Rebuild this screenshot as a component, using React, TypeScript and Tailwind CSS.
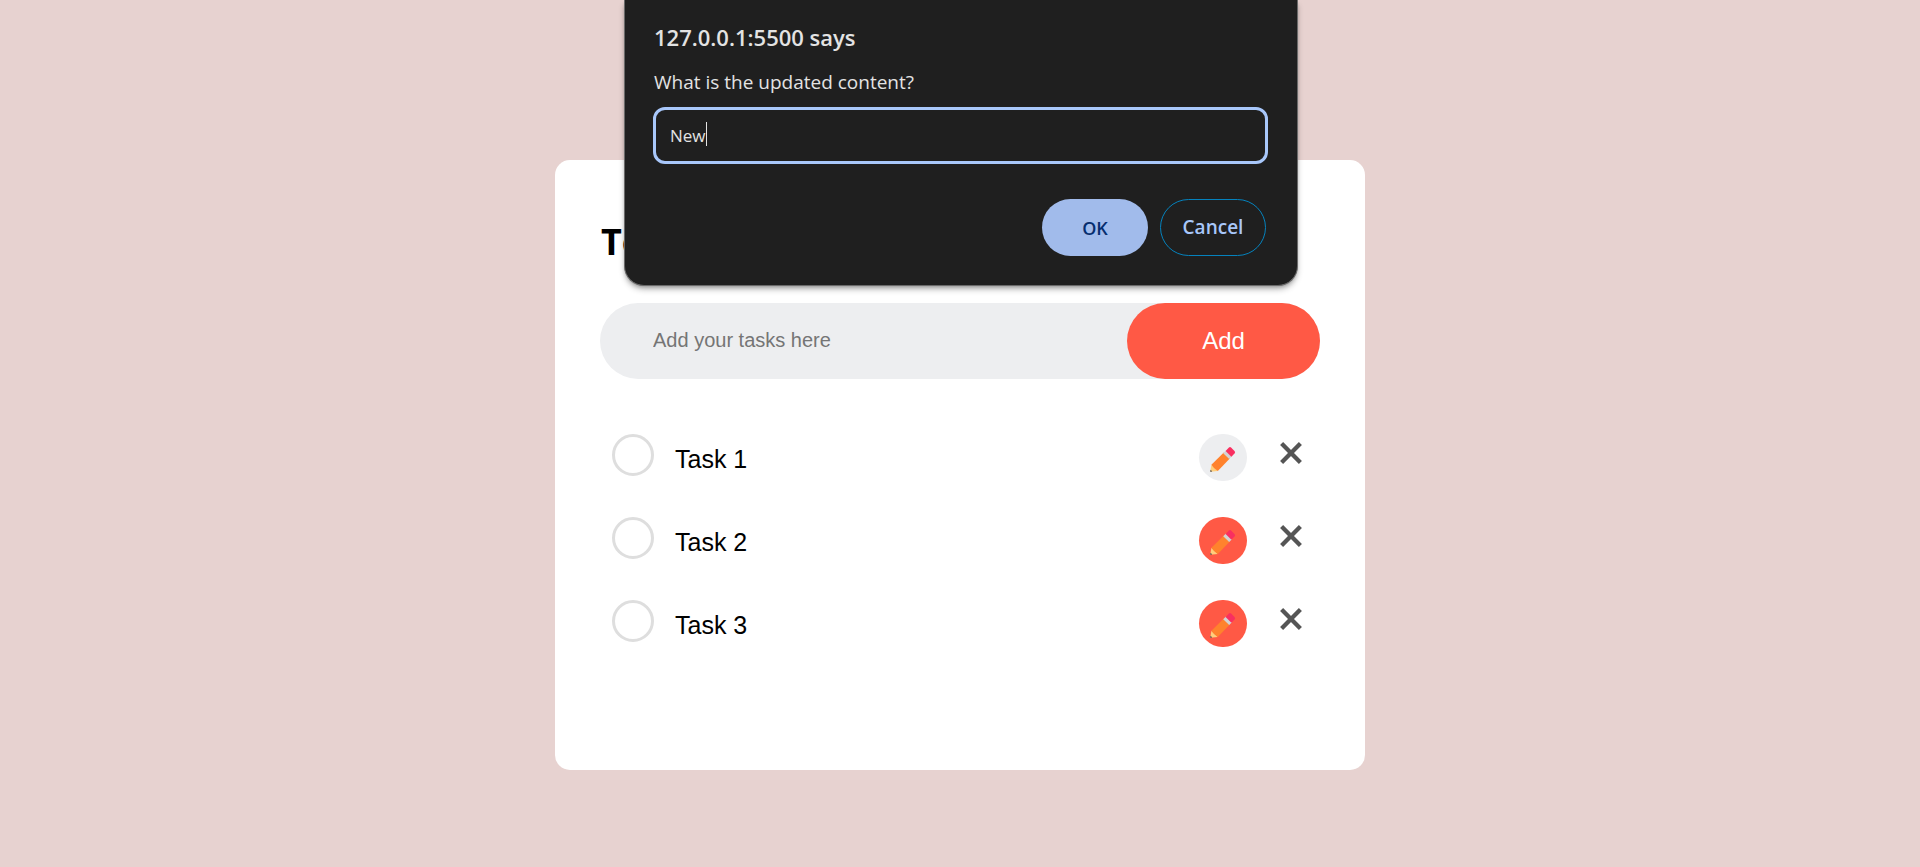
import { useState } from 'react';

const initialTasks = ['Task 1', 'Task 2', 'Task 3'];

function Pencil() {
  return (
    <svg viewBox="0 0 28 28" className="size-7" aria-hidden="true">
      <path d="M1.2 27.7 2.400 20.800 8.800 27Z" fill="#ffce7c" />
      <path d="M1.2 27.7 1.600 25.800 3.200 27.400Z" fill="#3f3f46" />
      <path d="M2.400 20.800 14.800 8.600 20.800 14.500 8.800 27Q5 25 2.400 20.800Z" fill="#ff822d" />
      <path d="M14.200 9.200 17 6.400 23 12.300 20.200 15.100Z" fill="#d3d3d3" />
      <path d="M16.600 6.900 19.700 3.700Q21 2.500 22.300 3.700L25.500 6.900Q26.700 8.200 25.500 9.500L22.400 12.700Z" fill="#f92f60" />
    </svg>
  );
}

function Cross() {
  return (
    <svg viewBox="0 0 22 22" className="size-[22px]" aria-hidden="true">
      <path
        d="M1.600 1.600 20.400 20.400M20.400 1.600 1.600 20.400"
        stroke="#555"
        strokeWidth="4.300"
        fill="none"
      />
    </svg>
  );
}

function TaskRow({ name, editing }: { name: string; editing: boolean }) {
  const id = name.toLowerCase().replace(' ', '-');
  return (
    <li className="flex h-[83px] items-start pl-3 pr-[18px]">
      <input
        id={id}
        type="checkbox"
        className="size-[42px] shrink-0 appearance-none rounded-full border-3 border-[#dedede] bg-white"
      />
      <label htmlFor={id} className="grow pt-[5px] pl-[21px] text-[25px] leading-10">
        {name}
      </label>
      <button
        type="button"
        aria-label={`Edit ${name}`}
        className={`flex h-[47px] w-12 items-center justify-center rounded-full ${editing ? 'bg-[#edeef0]' : 'bg-[#ff5945]'}`}
      >
        <Pencil />
      </button>
      <button type="button" aria-label={`Delete ${name}`} className="ml-[33px] flex h-[38px] items-center">
        <Cross />
      </button>
    </li>
  );
}

function PromptDialog() {
  const [value, setValue] = useState('New');
  return (
    <div
      role="dialog"
      aria-labelledby="prompt-title"
      className="absolute top-0 left-1/2 ml-px w-[674px] -translate-x-1/2 rounded-b-[20px] border border-t-0 border-[#6a6a6a] bg-[#1f1f1f] pt-5 pr-[29px] pb-[29px] pl-7 font-['Open_Sans',sans-serif] text-[#e3e3e3] shadow-md shadow-black/30"
    >
      <h2 id="prompt-title" className="pl-px text-[22px] leading-[35px] font-semibold">
        127.0.0.1:5500 says
      </h2>
      <label htmlFor="prompt-value" className="mt-[11px] block pl-px text-[19px] leading-8">
        What is the updated content?
      </label>
      <div className="relative mt-[9px]">
        <input
          id="prompt-value"
          value={value}
          onChange={(e) => setValue(e.target.value)}
          className="block h-[57px] w-full rounded-xl border-3 border-[#a8c7fa] bg-transparent px-3.5 text-[17px] caret-transparent outline-none"
        />
        <span aria-hidden="true" className="absolute top-[15px] left-[53px] h-6 w-px bg-[#e3e3e3]" />
      </div>
      <div className="mt-[35px] flex justify-end gap-3 pr-0.5 font-semibold">
        <button type="button" className="h-[57px] w-[106px] rounded-full bg-[#a1bbeb] text-lg text-[#062e6f]">
          OK
        </button>
        <button
          type="button"
          className="h-[57px] w-[106px] rounded-full border border-[#0582bd] text-[19px] text-[#a8c7fa]"
        >
          Cancel
        </button>
      </div>
    </div>
  );
}

export default function App() {
  return (
    <div className="relative min-h-screen bg-[#e7d2d0] px-4 pt-40 pb-10 font-['Liberation_Sans',Arial,sans-serif] text-black">
      <main className="mx-auto max-w-[810px] rounded-[15px] bg-white px-[45px] pt-[60px] pb-[87px]">
        <h1 className="pl-px font-['Open_Sans',sans-serif] text-4xl leading-[43px] font-bold">To-Do List</h1>
        <form className="mt-10 flex rounded-full bg-[#edeef0]" onSubmit={(e) => e.preventDefault()}>
          <input
            aria-label="New task"
            placeholder="Add your tasks here"
            className="h-[76px] min-w-0 grow bg-transparent pb-0.5 pl-[53px] text-xl outline-none placeholder:text-[#757575]"
          />
          <button type="submit" className="h-[76px] w-[193px] rounded-full bg-[#ff5945] text-2xl text-white">
            Add
          </button>
        </form>
        <ul className="mt-[55px]">
          {initialTasks.map((name, i) => (
            <TaskRow key={name} name={name} editing={i === 0} />
          ))}
        </ul>
      </main>
      <PromptDialog />
    </div>
  );
}
